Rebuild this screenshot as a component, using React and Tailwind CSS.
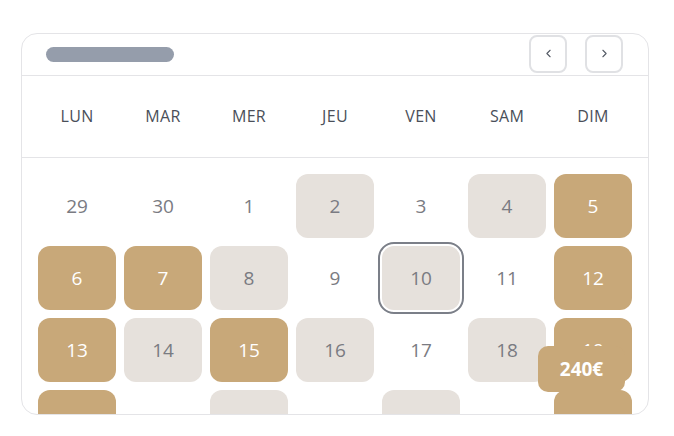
import React from 'react';
import { ChevronLeft, ChevronRight } from 'lucide-react';

const days = ['LUN', 'MAR', 'MER', 'JEU', 'VEN', 'SAM', 'DIM'];

// g = booked (gold), r = unavailable (grey), s = selected, '' = free
const weeks = [
  [['29', ''], ['30', ''], ['1', ''], ['2', 'r'], ['3', ''], ['4', 'r'], ['5', 'g']],
  [['6', 'g'], ['7', 'g'], ['8', 'r'], ['9', ''], ['10', 's'], ['11', ''], ['12', 'g']],
  [['13', 'g'], ['14', 'r'], ['15', 'g'], ['16', 'r'], ['17', ''], ['18', 'r'], ['19', 'g']],
  [['20', 'g'], ['21', ''], ['22', 'r'], ['23', ''], ['24', 'r'], ['25', ''], ['26', 'g']],
];

const cellStyles = {
  g: 'bg-[#c8a879] text-white',
  r: 'bg-[#e6e1dc] text-[#7a7b82]',
  s: 'bg-[#e6e1dc] text-[#7a7b82] outline-2 outline-offset-2 outline-[#7b7f88]',
  '': 'text-[#7a7b82]',
};

export default function App() {
  return (
    <div className="min-h-screen bg-white pt-[33px] pl-[21px]" style={{ fontFamily: '"Open Sans", "Liberation Sans", sans-serif' }}>
      <div className="w-[628px] h-[382px] rounded-2xl border border-[#e4e4e7] overflow-hidden bg-white">
        {/* Header */}
        <div className="h-[42px] flex items-center justify-between border-b border-[#e4e4e7] pl-6 pr-[25px] pb-[2px]">
          <div className="w-[128px] h-[15px] rounded-full bg-[#959dab] mt-[1px]" />
          <div className="flex items-center gap-[18px]">
            <button className="w-[38px] h-[38px] rounded-lg border-2 border-[#e0e1e4] flex items-center justify-center text-[#555b66]">
              <ChevronLeft size={13} strokeWidth={2} />
            </button>
            <button className="w-[38px] h-[38px] rounded-lg border-2 border-[#e0e1e4] flex items-center justify-center text-[#555b66]">
              <ChevronRight size={13} strokeWidth={2} />
            </button>
          </div>
        </div>

        {/* Weekdays */}
        <div className="h-[82px] grid grid-cols-7 gap-2 px-4 items-center border-b border-[#e4e4e7] pb-[2px]">
          {days.map((d) => (
            <div key={d} className="text-center text-[16px] text-[#4a4f59] tracking-[0.02em]">{d}</div>
          ))}
        </div>

        {/* Days grid */}
        <div className="relative grid grid-cols-7 gap-2 px-4 pt-4">
          {weeks.flat().map(([n, t], i) => (
            <div
              key={i}
              className={`h-16 rounded-xl flex items-center justify-center text-[19px] ${cellStyles[t]}`}
            >
              {n}
            </div>
          ))}
          <div className="absolute left-[516px] top-[188px] w-[87px] h-[46px] rounded-[10px] bg-[#c8a879] flex items-center justify-center text-white font-bold text-[19px]">
            240€
          </div>
        </div>
      </div>
    </div>
  );
}
